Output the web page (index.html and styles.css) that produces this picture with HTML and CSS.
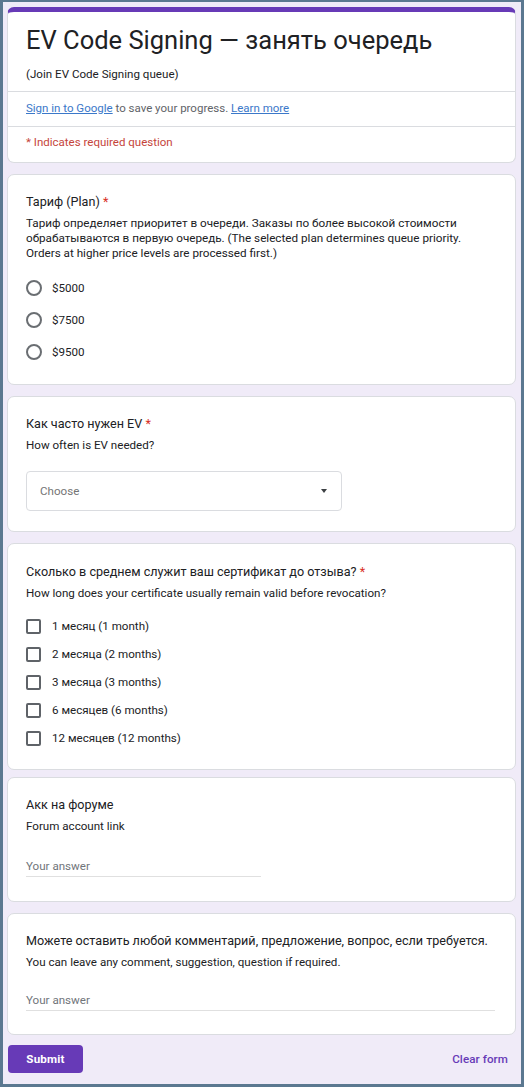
FILE: index.html
```html
<!DOCTYPE html>
<html lang="ru">
<head>
<meta charset="utf-8">
<title>EV Code Signing — занять очередь</title>
<link rel="stylesheet" href="styles.css">
</head>
<body>
<div class="frame">
  <div class="card card-head">
    <div class="head-main">
      <h1 class="form-title">EV Code Signing — занять очередь</h1>
      <div class="form-sub">(Join EV Code Signing queue)</div>
    </div>
    <div class="head-row signin"><a class="link" href="#">Sign in to Google</a> to save your progress. <a class="link" href="#">Learn more</a></div>
    <div class="head-row req">* Indicates required question</div>
  </div>

  <div class="card q q-plan">
    <div class="q-title">Тариф (Plan) <span class="star">*</span></div>
    <div class="q-desc desc-wide">Тариф определяет приоритет в очереди. Заказы по более высокой стоимости обрабатываются в первую очередь. (The selected plan determines queue priority. Orders at higher price levels are processed first.)</div>
    <div class="radios">
      <div class="opt"><span class="radio"></span><span class="opt-label">$5000</span></div>
      <div class="opt"><span class="radio"></span><span class="opt-label">$7500</span></div>
      <div class="opt"><span class="radio"></span><span class="opt-label">$9500</span></div>
    </div>
  </div>

  <div class="card q q-freq">
    <div class="q-title">Как часто нужен EV <span class="star">*</span></div>
    <div class="q-desc">How often is EV needed?</div>
    <div class="select">
      <span class="select-text">Choose</span>
      <span class="caret"></span>
    </div>
  </div>

  <div class="card q q-life">
    <div class="q-title">Сколько в среднем служит ваш сертификат до отзыва? <span class="star">*</span></div>
    <div class="q-desc">How long does your certificate usually remain valid before revocation?</div>
    <div class="checks">
      <div class="chk"><span class="box"></span><span class="opt-label">1 месяц (1 month)</span></div>
      <div class="chk"><span class="box"></span><span class="opt-label">2 месяца (2 months)</span></div>
      <div class="chk"><span class="box"></span><span class="opt-label">3 месяца (3 months)</span></div>
      <div class="chk"><span class="box"></span><span class="opt-label">6 месяцев (6 months)</span></div>
      <div class="chk"><span class="box"></span><span class="opt-label">12 месяцев (12 months)</span></div>
    </div>
  </div>

  <div class="card q q-forum">
    <div class="q-title">Акк на форуме</div>
    <div class="q-desc">Forum account link</div>
    <div class="answer answer-short">Your answer</div>
  </div>

  <div class="card q q-comment">
    <div class="q-title">Можете оставить любой комментарий, предложение, вопрос, если требуется.</div>
    <div class="q-desc">You can leave any comment, suggestion, question if required.</div>
    <div class="answer answer-long">Your answer</div>
  </div>

  <div class="actions">
    <button class="submit" type="button">Submit</button>
    <a class="clear" href="#">Clear form</a>
  </div>
</div>
</body>
</html>
```

FILE: styles.css
```css
html, body {
  margin: 0;
  padding: 0;
}

body {
  font-family: Roboto, "Noto Sans", Arial, sans-serif;
  color: #202124;
  background: #f0ebf8;
}

.frame {
  box-sizing: border-box;
  width: 524px;
  height: 1087px;
  border-style: solid;
  border-color: #5b7890;
  border-width: 2px 3px 3px 3px;
  background: #f0ebf8;
  padding: 5px 5px 0 4px;
  overflow: hidden;
}

.card {
  background: #ffffff;
  border: 1px solid #dadce0;
  border-radius: 7px;
  box-sizing: border-box;
}

/* header card */
.card-head {
  border-top: 5px solid #673ab7;
  height: 156px;
}

.head-main {
  box-sizing: border-box;
  padding: 13px 18px 0 18px;
  height: 80px;
  border-bottom: 1px solid #dadce0;
}

.form-title {
  margin: 0;
  font-weight: 400;
  font-size: 25.5px;
  line-height: 30px;
  color: #202124;
}

.form-sub {
  margin-top: 11px;
  font-size: 11.6px;
  line-height: 16px;
  color: #202124;
}

.head-row {
  padding: 0 18px;
  font-size: 11.5px;
  line-height: 16px;
}

.signin {
  padding-top: 8px;
  padding-bottom: 10px;
  color: #5f6368;
  border-bottom: 1px solid #dadce0;
}

.link {
  color: #3b78c9;
  text-decoration: underline;
}

.req {
  padding-top: 7px;
  color: #c5443b;
}

/* question cards */
.q {
  padding: 0 12px 0 18px;
}

.q-title {
  font-size: 12.6px;
  line-height: 18px;
  color: #202124;
  white-space: nowrap;
}

.star {
  color: #d93025;
}

.q-desc {
  margin-top: 5px;
  font-size: 11.6px;
  line-height: 15px;
  color: #202124;
}

.desc-wide {
  font-size: 11.7px;
  max-width: 448px;
}

.opt-label {
  font-size: 11.6px;
  color: #202124;
}

.q-plan {
  margin-top: 11px;
  padding-top: 18px;
  padding-bottom: 16px;
}

.radios {
  margin-top: 11px;
}

.opt {
  height: 32px;
  display: flex;
  align-items: center;
  gap: 10px;
}

.radio {
  box-sizing: border-box;
  width: 16px;
  height: 16px;
  border: 2px solid #6a6e72;
  border-radius: 50%;
  flex: none;
}

.q-freq {
  margin-top: 11px;
  padding-top: 18px;
  padding-bottom: 20px;
}

.select {
  box-sizing: border-box;
  margin-top: 18px;
  width: 316px;
  height: 40px;
  border: 1px solid #dadce0;
  border-radius: 4px;
  display: flex;
  align-items: center;
  justify-content: space-between;
  padding: 0 14px 0 13px;
}

.select-text {
  font-size: 11.6px;
  color: #757575;
}

.caret {
  width: 0;
  height: 0;
  border-left: 3.5px solid transparent;
  border-right: 3.5px solid transparent;
  border-top: 4px solid #3c4043;
}

.q-life {
  margin-top: 11px;
  padding-top: 19px;
  padding-bottom: 17px;
}

.checks {
  margin-top: 11px;
}

.chk {
  height: 28px;
  display: flex;
  align-items: center;
  gap: 11px;
}

.box {
  box-sizing: border-box;
  width: 15px;
  height: 15px;
  border: 2px solid #5f6368;
  border-radius: 2px;
  flex: none;
}

.q-forum {
  margin-top: 7px;
  padding-top: 18px;
  padding-bottom: 24px;
}

.answer {
  box-sizing: border-box;
  margin-top: 24px;
  height: 19px;
  font-size: 11.6px;
  line-height: 16px;
  color: #70757a;
  border-bottom: 1px solid #e0e0e0;
}

.answer-short {
  width: 235px;
}

.answer-long {
  width: 469px;
  margin-top: 22px;
}

.q-comment {
  margin-top: 11px;
  padding-top: 18px;
  padding-bottom: 23px;
}

.actions {
  margin-top: 10px;
  display: flex;
  align-items: center;
  justify-content: space-between;
  padding-left: 1px;
  padding-right: 8px;
}

.submit {
  width: 75px;
  height: 28px;
  border: none;
  border-radius: 4px;
  background: #673ab7;
  color: #ffffff;
  font-family: Roboto, "Noto Sans", Arial, sans-serif;
  font-size: 11.6px;
  font-weight: 700;
  letter-spacing: 0.2px;
  padding: 0;
}

.clear {
  color: #673ab7;
  font-size: 11.6px;
  font-weight: 500;
  text-decoration: none;
  letter-spacing: 0.1px;
}
```
